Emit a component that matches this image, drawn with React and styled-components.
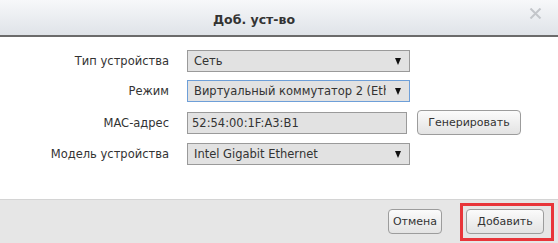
import React from "react";
import styled, { createGlobalStyle } from "styled-components";

const Global = createGlobalStyle`
  html, body { margin: 0; padding: 0; background: #ffffff; }
  body { font-family: "DejaVu Sans", Verdana, sans-serif; }
`;

const Dialog = styled.div`
  width: 558px;
  height: 243px;
  display: flex;
  flex-direction: column;
  background: #fff;
  overflow: hidden;
`;

const Header = styled.div`
  box-sizing: border-box;
  height: 37px;
  flex: none;
  display: flex;
  align-items: center;
  justify-content: center;
  position: relative;
  padding-right: 50px;
  background: linear-gradient(#f7f8fa, #dfe3e8);
  border-bottom: 2px solid #6b6b6b;
`;

const Title = styled.div`
  font-size: 12.5px;
  font-weight: bold;
  color: #333;
  padding-top: 3px;
`;

const Close = styled.svg`
  position: absolute;
  right: 16px;
  top: 8px;
`;

const Body = styled.div`
  flex: 1;
  padding-top: 13px;
`;

const Form = styled.div`
  display: grid;
  grid-template-columns: 169px auto;
  column-gap: 18px;
  row-gap: 8px;
  align-items: center;
`;

const Label = styled.div`
  text-align: right;
  font-size: 11.5px;
  color: #333;
`;

const FieldRow = styled.div`
  display: flex;
  align-items: center;
  gap: 10px;
`;

const Select = styled.div`
  box-sizing: border-box;
  width: 223px;
  height: 22px;
  display: flex;
  align-items: center;
  justify-content: space-between;
  padding: 0 8px 0 6px;
  background: #e2e2e2;
  border: 1px solid ${(p) => (p.$focus ? "#6e9fd8" : "#9a9a9a")};
  font-size: 11.5px;
  color: #333;
  white-space: nowrap;
  overflow: hidden;
`;

const SelText = styled.span`
  overflow: hidden;
  width: 192px;
  white-space: nowrap;
`;

const Arrow = styled.span`
  width: 0;
  height: 0;
  border-left: 3.5px solid transparent;
  border-right: 3.5px solid transparent;
  border-top: 7px solid #111;
  flex: none;
`;

const Input = styled.div`
  box-sizing: border-box;
  width: 220px;
  height: 22px;
  display: flex;
  align-items: center;
  padding: 0 4px;
  background: #e2e2e2;
  border: 1px solid #9a9a9a;
  font-size: 11.5px;
  color: #333;
`;

const Button = styled.button`
  box-sizing: border-box;
  flex: none;
  height: 25px;
  width: ${(p) => p.$w}px;
  border: 1px solid #9c9c9c;
  border-radius: 4px;
  background: linear-gradient(#fbfbfb, #e3e3e3);
  font-family: "DejaVu Sans", Verdana, sans-serif;
  font-size: 11px;
  color: #333;
  padding: 0;
  cursor: pointer;
`;

const Footer = styled.div`
  box-sizing: border-box;
  height: 44px;
  flex: none;
  display: flex;
  align-items: flex-start;
  justify-content: flex-end;
  gap: 18px;
  padding: 3px 4px 0 0;
  background: #e6e6e6;
  border-top: 1px solid #d4d4d4;
`;

const CancelWrap = styled.div`
  flex: none;
  padding-top: 6px;
`;

const Highlight = styled.div`
  flex: none;
  border: 3px solid #e8353a;
  padding: 3px 7px 4px 3px;
  display: flex;
`;

export default function App() {
  return (
    <>
      <Global />
      <Dialog>
        <Header>
          <Title>Доб. уст-во</Title>
          <Close width="13" height="11" viewBox="0 0 13 11">
            <path d="M1.5 0.5 L11.5 10.5 M11.5 0.5 L1.5 10.5" stroke="#c3c6ca" strokeWidth="2" />
          </Close>
        </Header>
        <Body>
          <Form>
            <Label>Тип устройства</Label>
            <Select>
              <SelText>Сеть</SelText>
              <Arrow />
            </Select>
            <Label>Режим</Label>
            <Select $focus>
              <SelText>Виртуальный коммутатор 2 (Ethernet)</SelText>
              <Arrow />
            </Select>
            <Label>MAC-адрес</Label>
            <FieldRow>
              <Input>52:54:00:1F:A3:B1</Input>
              <Button $w={104}>Генерировать</Button>
            </FieldRow>
            <Label>Модель устройства</Label>
            <Select>
              <SelText>Intel Gigabit Ethernet</SelText>
              <Arrow />
            </Select>
          </Form>
        </Body>
        <Footer>
          <CancelWrap>
            <Button $w={54}>Отмена</Button>
          </CancelWrap>
          <Highlight>
            <Button $w={78}>Добавить</Button>
          </Highlight>
        </Footer>
      </Dialog>
    </>
  );
}
